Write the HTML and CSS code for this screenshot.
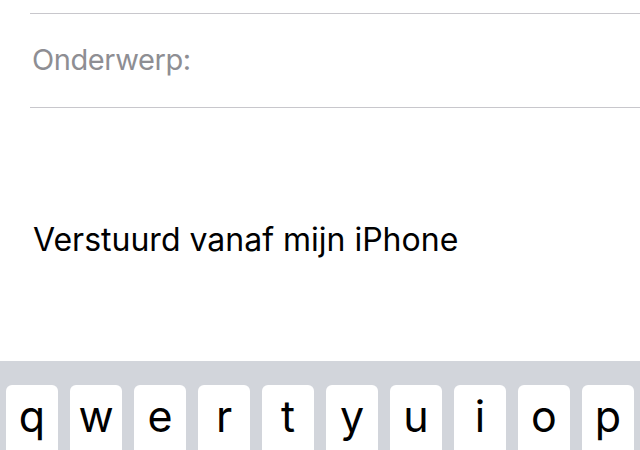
FILE: index.html
```html
<!DOCTYPE html>
<html lang="nl">
<head>
  <meta charset="UTF-8">
  <meta name="viewport" content="width=device-width, initial-scale=1.0">
  <title>Nieuw bericht</title>
  <link rel="stylesheet" href="styles.css">
</head>
<body>

  <!-- Compose fields -->
  <div class="compose">
    <div class="field">
      <span class="field-label">Onderwerp:</span>
    </div>
    <div class="body-text">Verstuurd vanaf mijn iPhone</div>
  </div>

  <!-- Keyboard -->
  <div class="keyboard">
    <div class="key-row">
      <div class="key">q</div>
      <div class="key">w</div>
      <div class="key">e</div>
      <div class="key">r</div>
      <div class="key">t</div>
      <div class="key">y</div>
      <div class="key">u</div>
      <div class="key">i</div>
      <div class="key">o</div>
      <div class="key">p</div>
    </div>
  </div>

</body>
</html>
```

FILE: styles.css
```css
body {
  font-family: Inter, "Liberation Sans", sans-serif;
  margin: 0;
  padding: 0;
  width: 640px;
  height: 450px;
  overflow: hidden;
  background-color: #fff;
}

.compose {
  height: 361px;
  padding-top: 13px;
  box-sizing: border-box;
}

.field {
  margin-left: 30px;
  border-top: 1px solid #c8c7cc;
  border-bottom: 1px solid #c8c7cc;
  height: 93px;
  display: flex;
  align-items: center;
  padding-left: 2px;
}

.field-label {
  color: #8e8e93;
  font-size: 29px;
  letter-spacing: -0.4px;
  margin-top: -2px;
}

.body-text {
  margin-top: 112px;
  padding-left: 33px;
  font-size: 32px;
  color: #000;
}

.keyboard {
  background-color: #d2d5db;
  padding: 24px 6px 0;
  height: 89px;
  box-sizing: border-box;
  overflow: hidden;
}

.key-row {
  display: flex;
  gap: 12px;
}

.key {
  flex: 1;
  height: 90px;
  background-color: #fff;
  border-radius: 6px;
  font-size: 43px;
  text-align: center;
  line-height: 62px;
  color: #000;
}
```
